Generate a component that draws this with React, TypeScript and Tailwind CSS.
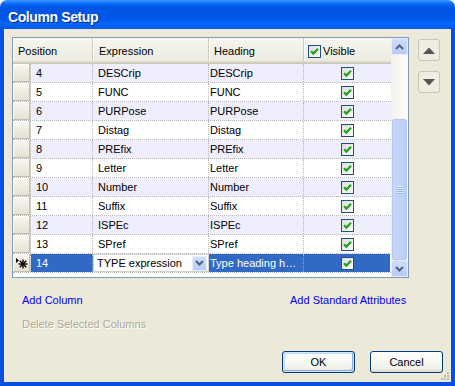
import React from "react";

const rows = [
  { pos: "4", expr: "DESCrip", head: "DESCrip" },
  { pos: "5", expr: "FUNC", head: "FUNC" },
  { pos: "6", expr: "PURPose", head: "PURPose" },
  { pos: "7", expr: "Distag", head: "Distag" },
  { pos: "8", expr: "PREfix", head: "PREfix" },
  { pos: "9", expr: "Letter", head: "Letter" },
  { pos: "10", expr: "Number", head: "Number" },
  { pos: "11", expr: "Suffix", head: "Suffix" },
  { pos: "12", expr: "ISPEc", head: "ISPEc" },
  { pos: "13", expr: "SPref", head: "SPref" },
];

function Check() {
  return (
    <span className="flex h-[13px] w-[13px] items-center justify-center border border-[#1C5180] bg-[linear-gradient(135deg,#DCDCD7,#FFFFFF)]">
      <svg width="9" height="9" viewBox="0 0 9 9">
        <path d="M1 4.2 L3.4 6.6 L8 1.8" stroke="#21A121" strokeWidth="2.2" fill="none" />
      </svg>
    </span>
  );
}

function Chevron({ up }: { up?: boolean }) {
  return (
    <svg width="9" height="6" viewBox="0 0 9 6">
      <path
        d={up ? "M1 5 L4.5 1.5 L8 5" : "M1 1 L4.5 4.5 L8 1"}
        stroke="#4D6185"
        strokeWidth="2"
        fill="none"
      />
    </svg>
  );
}

const rowHead =
  "w-[18px] h-full shrink-0 bg-[linear-gradient(to_bottom,#F8F7F1,#E4E1D1)] shadow-[inset_-1px_-1px_#C2BEAC,inset_1px_1px_#FFFFFF] border-r border-dotted border-[#B8B8B8]";
const dotR = "border-r border-dotted border-[#B8B8B8]";

export default function App() {
  return (
    <div className="flex h-[386px] w-[455px] flex-col font-['Liberation_Sans',Arial,sans-serif] text-[11px] text-black">
      {/* title bar */}
      <div className="flex h-[29px] shrink-0 items-center rounded-t-[7px] bg-[linear-gradient(to_bottom,#3D95FF_0%,#1A7BFF_8%,#0262EE_16%,#0056E6_26%,#0054E3_55%,#005AF2_70%,#0466FB_82%,#0058EC_100%)] pl-[8px] pt-[5px]">
        <span className="text-[14px] font-bold tracking-[-0.4px] text-white [text-shadow:1px_1px_#0B2C8A]">
          Column Setup
        </span>
      </div>

      {/* body */}
      <div className="relative flex flex-1 flex-col border-x-4 border-b-4 border-[#0550E2] bg-[#ECE9D8] px-[8px] pt-[8px]">
        <div className="flex">
          {/* grid */}
          <div className="flex h-[241px] w-[397px] border border-[#7F9DB9] bg-white">
            <div className="flex w-[378px] flex-col">
              {/* header */}
              <div className="flex h-[26px] shrink-0">
                {[
                  { w: "w-[80px]", label: "Position", pl: "pl-[5px]" },
                  { w: "w-[116px]", label: "Expression", pl: "pl-[6px]" },
                  { w: "w-[95px]", label: "Heading", pl: "pl-[5px]" },
                ].map((h) => (
                  <div
                    key={h.label}
                    className={`${h.w} ${h.pl} flex h-full items-center bg-[linear-gradient(to_bottom,#F7F6EF,#EBEADF)] shadow-[inset_0_-1px_#CBC7B8,inset_0_-2px_#D6D2C2,inset_0_-3px_#E2DECD,inset_-1px_0_#CDCAB8,inset_1px_0_#FFFFFF]`}
                  >
                    {h.label}
                  </div>
                ))}
                <div className="flex h-full w-[87px] items-center gap-[2px] bg-[linear-gradient(to_bottom,#F7F6EF,#EBEADF)] pl-[4px] shadow-[inset_0_-1px_#CBC7B8,inset_0_-2px_#D6D2C2,inset_0_-3px_#E2DECD,inset_1px_0_#FFFFFF]">
                  <Check />
                  <span>Visible</span>
                </div>
              </div>

              {/* data rows */}
              {rows.map((r, i) => (
                <div
                  key={r.pos}
                  className={`flex h-[19px] shrink-0 border-b border-dotted border-[#B8B8B8] ${
                    i % 2 === 0 ? "bg-[#EEEEFF]" : "bg-white"
                  }`}
                >
                  <div className={rowHead} />
                  <div className={`w-[62px] ${dotR} flex items-center pl-[5px]`}>{r.pos}</div>
                  <div className={`w-[116px] ${dotR} flex items-center pl-[5px]`}>{r.expr}</div>
                  <div className={`w-[95px] ${dotR} flex items-center pl-[1px]`}>{r.head}</div>
                  <div className="flex w-[86px] items-center justify-center">
                    <Check />
                  </div>
                </div>
              ))}

              {/* new row */}
              <div className="flex h-[19px] shrink-0 border-b border-dotted border-[#B8B8B8]">
                <div className={`${rowHead} flex items-center justify-center`}>
                  <svg width="14" height="13" viewBox="0 0 14 13">
                    <path d="M1 1 L4 3.5 L1 6 Z" fill="#000" />
                    <g stroke="#000" strokeWidth="1.4">
                      <path d="M8 2.5 V11.5" />
                      <path d="M3.5 7 H12.5" />
                      <path d="M4.8 3.8 L11.2 10.2" />
                      <path d="M11.2 3.8 L4.8 10.2" />
                    </g>
                  </svg>
                </div>
                <div className="flex w-[62px] items-center border-r border-dotted border-[#8FA8D8] bg-[#316AC5] pl-[5px] text-white">
                  14
                </div>
                <div className="flex w-[116px] items-center justify-between border border-[#D4D0C8] bg-white pl-[3px] pr-[1px]">
                  <span>TYPE expression</span>
                  <span className="flex h-[15px] w-[15px] items-center justify-center rounded-[2px] bg-[linear-gradient(to_bottom,#D4E0FB,#B5C8F6)] shadow-[inset_0_0_0_1px_#E7EEFD]">
                    <Chevron />
                  </span>
                </div>
                <div className="flex w-[95px] items-center overflow-hidden whitespace-nowrap border-r border-dotted border-[#8FA8D8] bg-[#316AC5] pl-[1px] text-white">
                  Type heading h…
                </div>
                <div className="flex w-[86px] items-center justify-center bg-[#316AC5]">
                  <Check />
                </div>
              </div>
              <div className="flex-1 bg-white" />
            </div>

            {/* scrollbar */}
            <div className="flex w-[17px] flex-col bg-[linear-gradient(to_right,#F3F1EC,#FEFEFB)]">
              <div className="flex h-[17px] shrink-0 items-center justify-center rounded-[2px] bg-[linear-gradient(to_bottom,#D2DFFC,#B7CAF5)] shadow-[inset_0_0_0_1px_#E6EDFD]">
                <Chevron up />
              </div>
              <div className="flex flex-1 flex-col justify-end">
                <div className="mx-[1px] flex h-[141px] flex-col items-center justify-center gap-[1px] rounded-[2px] border border-[#B4C8F6] bg-[linear-gradient(to_right,#C9D8FC,#BACDF9)]">
                  {[0, 1, 2, 3].map((k) => (
                    <span key={k} className="h-[1px] w-[6px] bg-[#EEF4FE] shadow-[0_1px_#8CB0F8]" />
                  ))}
                </div>
              </div>
              <div className="flex h-[17px] shrink-0 items-center justify-center rounded-[2px] bg-[linear-gradient(to_bottom,#D2DFFC,#B7CAF5)] shadow-[inset_0_0_0_1px_#E6EDFD]">
                <Chevron />
              </div>
            </div>
          </div>

          {/* move buttons */}
          <div className="ml-[9px] mt-[2px] flex flex-col gap-[10px]">
            <div className="flex h-[22px] w-[22px] items-center justify-center rounded-[3px] border border-[#CAC7B7] bg-[#EFEDE2]">
              <svg width="12" height="7" viewBox="0 0 12 7">
                <path d="M0 7 L6 0.5 L12 7 Z" fill="#555" />
              </svg>
            </div>
            <div className="flex h-[22px] w-[22px] items-center justify-center rounded-[3px] border border-[#CAC7B7] bg-[#EFEDE2]">
              <svg width="12" height="7" viewBox="0 0 12 7">
                <path d="M0 0 L12 0 L6 6.5 Z" fill="#555" />
              </svg>
            </div>
          </div>
        </div>

        {/* links */}
        <div className="mt-[15px] flex h-[14px] items-center pl-[10px] text-[#0000FF]">
          <span className="w-[268px]">Add Column</span>
          <span>Add Standard Attributes</span>
        </div>
        <div className="mt-[10px] flex h-[14px] items-center pl-[10px] text-[#ACA899] [text-shadow:1px_1px_#FFFFFF]">
          Delete Selected Columns
        </div>

        {/* dialog buttons */}
        <div className="mt-[20px] flex justify-end gap-[15px]">
          <button className="flex h-[22px] w-[73px] items-center justify-center rounded-[3px] border border-[#003C74] bg-[linear-gradient(to_bottom,#FFFFFF,#F2F2EC_80%,#DCD8CC)] shadow-[inset_0_0_0_1px_#CEE7FF,inset_-2px_-2px_#8BAEEA,inset_2px_2px_#C4DBFB]">
            OK
          </button>
          <button className="flex h-[22px] w-[73px] items-center justify-center rounded-[3px] border border-[#003C74] bg-[linear-gradient(to_bottom,#FFFFFF,#F2F2EC_80%,#DCD8CC)]">
            Cancel
          </button>
        </div>

        {/* size grip */}
        <svg className="absolute bottom-[1px] right-[1px]" width="10" height="10" viewBox="0 0 10 10">
          {[
            [7, 1],
            [4, 4],
            [7, 4],
            [1, 7],
            [4, 7],
            [7, 7],
          ].map(([x, y]) => (
            <rect key={`${x}-${y}`} x={x} y={y} width="2" height="2" fill="#BDB9A9" />
          ))}
        </svg>
      </div>
    </div>
  );
}
